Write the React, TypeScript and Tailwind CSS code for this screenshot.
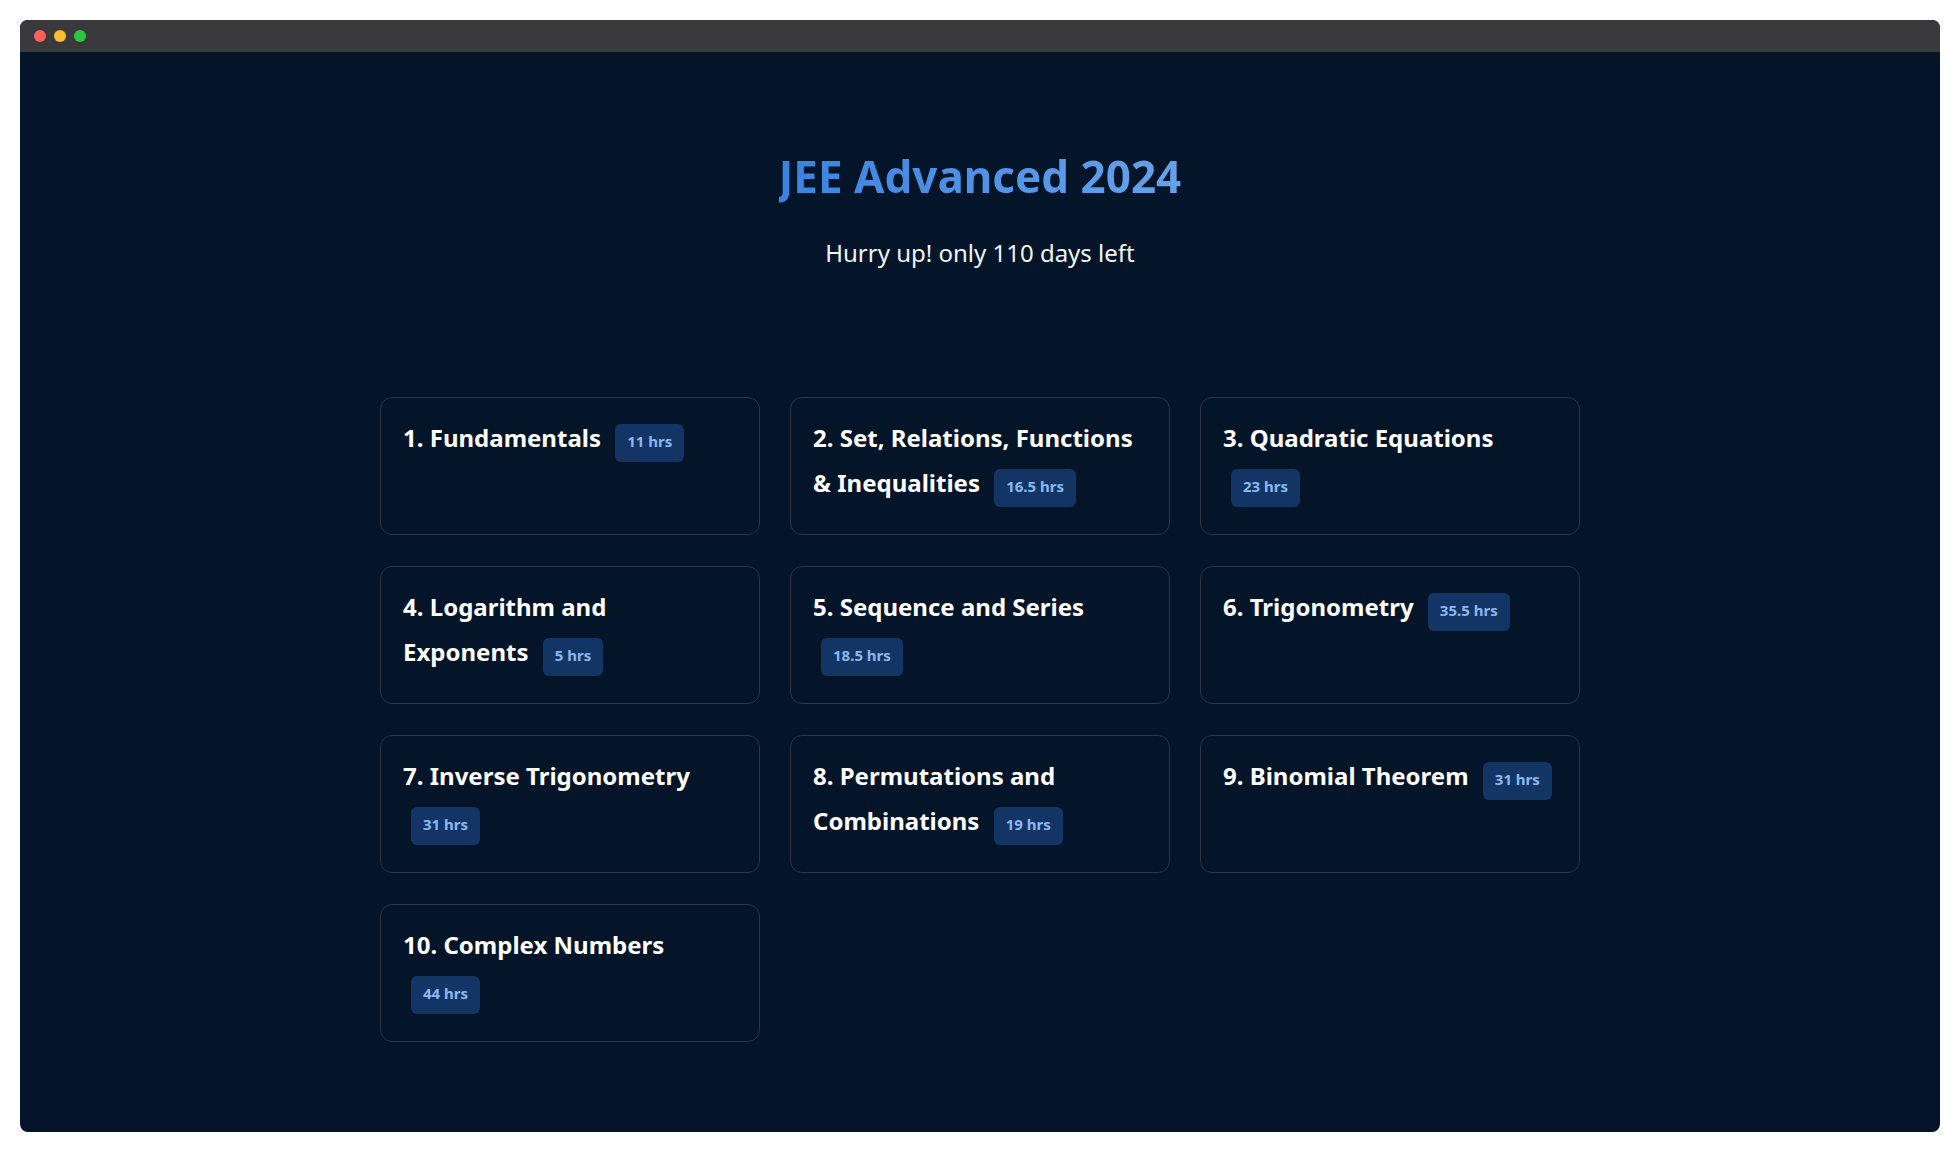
import React from 'react';

const topics = [
  { title: "1. Fundamentals", hours: "11 hrs" },
  { title: "2. Set, Relations, Functions & Inequalities", hours: "16.5 hrs" },
  { title: "3. Quadratic Equations", hours: "23 hrs" },
  { title: "4. Logarithm and Exponents", hours: "5 hrs" },
  { title: "5. Sequence and Series", hours: "18.5 hrs" },
  { title: "6. Trigonometry", hours: "35.5 hrs" },
  { title: "7. Inverse Trigonometry", hours: "31 hrs" },
  { title: "8. Permutations and Combinations", hours: "19 hrs" },
  { title: "9. Binomial Theorem", hours: "31 hrs" },
  { title: "10. Complex Numbers", hours: "44 hrs" }
];

const App: React.FC = () => {
  return (
    <div className="min-h-screen bg-white p-5" style={{ fontFamily: '"Noto Sans", sans-serif' }}>
      <div className="h-[1112px] rounded-lg overflow-hidden flex flex-col bg-[#041429]">
        {/* window title bar */}
        <div className="h-8 shrink-0 bg-[#3a3a3c] flex items-center gap-2 pl-[14px]">
          <span className="w-3 h-3 rounded-full bg-[#fe5f57]" />
          <span className="w-3 h-3 rounded-full bg-[#febc2e]" />
          <span className="w-3 h-3 rounded-full bg-[#28c840]" />
        </div>

        <div className="flex-1 pt-[98px]">
          <h1 className="text-center text-[44px] leading-[52px] font-bold">
            <span className="bg-linear-to-r from-[#3a83df] to-[#65a2ea] bg-clip-text text-transparent">
              JEE Advanced 2024
            </span>
          </h1>
          <p className="mt-[35px] text-center text-2xl leading-8 text-[#f1f5f9]">
            Hurry up! only 110 days left
          </p>

          <div className="mt-32 mx-auto w-[1200px] grid grid-cols-3 gap-x-[30px] gap-y-[31px]">
            {topics.map((item, index) => (
              <div
                key={index}
                className="rounded-xl border border-[#2a3546] pl-[22px] pr-6 pt-[17px] pb-[27px]"
              >
                <h3 className="text-2xl leading-[45px] font-bold text-white">
                  {item.title}{' '}
                  <span className="inline-block ml-2 px-3 pt-[5px] pb-[9px] rounded-md bg-[#123566] text-[15px] leading-6 font-bold text-[#8db8ef]">
                    {item.hours}
                  </span>
                </h3>
              </div>
            ))}
          </div>
        </div>
      </div>
    </div>
  );
};

export default App;
